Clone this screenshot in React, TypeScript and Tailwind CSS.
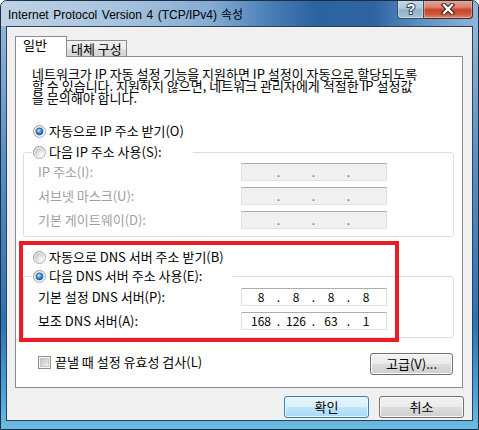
import React from "react";

const KR = "font-['Noto_Sans_CJK_KR','Noto_Sans_CJK_SC',sans-serif]";

function Radio({ checked }: { checked: boolean }) {
  return (
    <svg width="13" height="13" viewBox="0 0 13 13" className="shrink-0">
      <defs>
        <linearGradient id="rOuter" x1="0" y1="0" x2="1" y2="1">
          <stop offset="0" stopColor="#8b8c8c" />
          <stop offset="1" stopColor="#b9b9b9" />
        </linearGradient>
        <radialGradient id="rIn" cx="0.7" cy="0.75" r="0.85">
          <stop offset="0" stopColor="#ffffff" />
          <stop offset="1" stopColor="#c2c4c6" />
        </radialGradient>
        <radialGradient id="rDot" cx="0.4" cy="0.35" r="0.75">
          <stop offset="0" stopColor="#c6ebfd" />
          <stop offset="0.45" stopColor="#3d9be0" />
          <stop offset="1" stopColor="#0c4b91" />
        </radialGradient>
      </defs>
      <circle cx="6.5" cy="6.5" r="6" fill="#f5f5f5" stroke="url(#rOuter)" strokeWidth="1" />
      <circle cx="6.5" cy="6.5" r="4.6" fill="url(#rIn)" />
      {checked && (
        <circle cx="6.5" cy="6.5" r="3.4" fill="url(#rDot)" stroke="#1a4f88" strokeWidth="0.7" />
      )}
    </svg>
  );
}

function Checkbox() {
  return (
    <svg width="13" height="13" viewBox="0 0 13 13" className="shrink-0">
      <defs>
        <linearGradient id="cbIn" x1="0" y1="0" x2="1" y2="1">
          <stop offset="0" stopColor="#b8bcc2" />
          <stop offset="1" stopColor="#f4f4f5" />
        </linearGradient>
      </defs>
      <rect x="0.5" y="0.5" width="12" height="12" fill="#f6f6f6" stroke="#8e8f8f" />
      <rect x="2.5" y="2.5" width="8" height="8" fill="url(#cbIn)" stroke="#c4c7cc" />
    </svg>
  );
}

function IpField({ values, disabled }: { values?: string[]; disabled?: boolean }) {
  return (
    <div
      className={`flex h-[18px] w-[146px] items-center border border-[#dde1e6] border-t-[#abadb3] pl-[3px] text-[12px] leading-[16px] ${
        disabled ? "bg-[#f0f0f0]" : "bg-white"
      }`}
    >
      {[0, 1, 2, 3].map((i) => (
        <React.Fragment key={i}>
          {i > 0 && (
            <span className={`flex w-[3px] justify-center ${disabled ? "text-[#6d6d6d]" : "text-black"}`}>.</span>
          )}
          <span className="w-[32px] text-center text-black">{values ? values[i] : ""}</span>
        </React.Fragment>
      ))}
    </div>
  );
}

function WinButton({ label, focused, className = "" }: { label: string; focused?: boolean; className?: string }) {
  return (
    <div
      className={`flex h-[22px] items-center justify-center rounded-[3px] border text-[13px] leading-[14px] text-black ${
        focused
          ? "border-[#3c7fb1] bg-[linear-gradient(to_bottom,#eaf6fd_0%,#d9f0fc_50%,#bee6fd_50%,#a7d9f5_100%)] shadow-[inset_0_0_0_1px_#e6f6ff]"
          : "border-[#707070] bg-[linear-gradient(to_bottom,#f2f2f2_0%,#ebebeb_50%,#dddddd_50%,#cfcfcf_100%)] shadow-[inset_0_0_0_1px_#fbfbfb]"
      } ${className}`}
    >
      {label}
    </div>
  );
}

export default function App() {
  return (
    <div className={`relative h-[430px] w-[479px] overflow-hidden ${KR}`}>
      <div className="h-[430px] w-[479px] overflow-hidden rounded-t-[7px] border border-[#1c3045] bg-[linear-gradient(to_bottom,#9cbddb_0%,#5c90c3_35%,#2e71b0_75%,#4ea3d8_92%,#6cbce4_100%)]">
        {/* Title bar */}
        <div className="flex h-[25px] bg-[linear-gradient(to_right,#bfd3e5_0%,#a6c3de_25%,#86acd3_44%,#4a80b8_56%,#2b62a0_66%,#2d64a1_78%,#5d90c2_88%,#8fb6da_100%)]">
          <div className="flex items-baseline whitespace-nowrap pl-[7px] pt-[5px] leading-[15px] text-black">
            <span className="inline-block w-[209px] font-['Liberation_Sans',sans-serif] text-[12px] [text-align-last:justify]">
              Internet Protocol Version 4 (TCP/IPv4)
            </span>
            <span className="ml-[4px] text-[12px]">속성</span>
          </div>
          <div className="ml-auto mr-[5px] flex h-[19px] -mt-px">
            <div className="flex h-full w-[27px] items-center justify-center rounded-bl-[4px] border border-t-0 border-[#3b4f63] bg-[linear-gradient(to_bottom,#c9d9e7_0%,#b3c8db_45%,#92afc8_55%,#a9c4da_100%)] shadow-[inset_0_0_0_1px_rgba(255,255,255,0.35)]">
              <svg width="16" height="16" viewBox="0 0 16 16">
                <text
                  x="8"
                  y="13"
                  textAnchor="middle"
                  fontFamily="Liberation Sans, sans-serif"
                  fontWeight="bold"
                  fontSize="14"
                  fill="#ffffff"
                  stroke="#33475c"
                  strokeWidth="2"
                  paintOrder="stroke"
                >
                  ?
                </text>
              </svg>
            </div>
            <div className="flex h-full w-[49px] items-center justify-center rounded-br-[4px] border border-l-0 border-t-0 border-[#4a2a25] bg-[linear-gradient(to_bottom,#e9a898_0%,#d8826e_40%,#c4442a_55%,#cf5a3e_80%,#e08a6e_100%)] shadow-[inset_0_0_0_1px_rgba(255,255,255,0.3)]">
              <svg width="14" height="12" viewBox="0 0 14 12">
                <path d="M3 2 L11 10 M11 2 L3 10" stroke="#3a1f1a" strokeWidth="4.5" strokeLinecap="square" />
                <path d="M3 2 L11 10 M11 2 L3 10" stroke="#ffffff" strokeWidth="2.4" strokeLinecap="square" />
              </svg>
            </div>
          </div>
        </div>

        {/* Client area */}
        <div className="ml-[5px] h-[395px] w-[467px] border border-[#2c4257] bg-[#f0f0f0]">
          {/* Tabs */}
          <div className="flex items-end pl-[8px] pt-[9px]">
            <div className="relative z-10 -mb-px h-[21px] w-[52px] border border-b-0 border-[#898c95] bg-white pl-[7px] pt-[2px] text-[13px] leading-[12px] text-black">
              일반
            </div>
            <div className="h-[16px] w-[60px] whitespace-nowrap border border-b-0 border-l-0 border-[#898c95] bg-[linear-gradient(to_bottom,#f3f3f3_0%,#ebebeb_50%,#dedede_50%,#d5d5d5_100%)] pl-[4px] pt-[2px] text-[13px] leading-[12px] text-black">
              대체 구성
            </div>
          </div>

          {/* Panel */}
          <div className="ml-[8px] flex h-[332px] w-[448px] flex-col border border-[#898c95] bg-white text-[13px] text-black">
            <div className="mt-[11px] pl-[16px] leading-[12px] whitespace-nowrap">
              <div>네트워크가 IP 자동 설정 기능을 지원하면 IP 설정이 자동으로 할당되도록</div>
              <div>할 수 있습니다. 지원하지 않으면, 네트워크 관리자에게 적절한 IP 설정값</div>
              <div>을 문의해야 합니다.</div>
            </div>

            <div className="ml-[17px] mt-[20px] flex h-[14px] items-center gap-[3px] leading-[14px]">
              <Radio checked />
              <span className="-mt-px">자동으로 IP 주소 받기(O)</span>
            </div>

            <div className="relative z-10 ml-[16px] mt-[7px] flex h-[14px] w-[161px] items-center gap-[3px] bg-white pl-[1px] leading-[14px]">
              <Radio checked={false} />
              <span className="-mt-px">다음 IP 주소 사용(S):</span>
            </div>
            <div className="ml-[7px] -mt-[7px] flex h-[85px] w-[431px] flex-col gap-[6px] rounded-[3px] border border-[#d5dfe5] pt-[10px]">
              {["IP 주소(I):", "서브넷 마스크(U):", "기본 게이트웨이(D):"].map((l) => (
                <div key={l} className="flex h-[18px] items-center">
                  <span className="w-[217px] pl-[14px] leading-[14px] text-[#a0a0a0]">{l}</span>
                  <IpField disabled />
                </div>
              ))}
            </div>

            <div className="ml-[17px] mt-[13px] flex h-[14px] items-center gap-[3px] leading-[14px]">
              <Radio checked={false} />
              <span className="-mt-px">자동으로 DNS 서버 주소 받기(B)</span>
            </div>

            <div className="relative z-10 ml-[16px] mt-[5px] flex h-[14px] w-[201px] items-center gap-[3px] bg-white pl-[1px] leading-[14px]">
              <Radio checked />
              <span className="-mt-px">다음 DNS 서버 주소 사용(E):</span>
            </div>
            <div className="ml-[7px] -mt-[7px] flex h-[62px] w-[431px] flex-col gap-[6px] rounded-[3px] border border-[#d5dfe5] pt-[11px]">
              <div className="flex h-[18px] items-center">
                <span className="w-[217px] pl-[14px] leading-[14px]">기본 설정 DNS 서버(P):</span>
                <IpField values={["8", "8", "8", "8"]} />
              </div>
              <div className="flex h-[18px] items-center">
                <span className="w-[217px] pl-[14px] leading-[14px]">보조 DNS 서버(A):</span>
                <IpField values={["168", "126", "63", "1"]} />
              </div>
            </div>

            <div className="mt-[15px] flex h-[22px]">
              <div className="ml-[22px] mt-[2px] flex h-[14px] items-center gap-[4px] self-start leading-[14px]">
                <Checkbox />
                <span className="-mt-px">끝낼 때 설정 유효성 검사(L)</span>
              </div>
              <WinButton label="고급(V)..." className="ml-auto mr-[9px] w-[83px]" />
            </div>
          </div>

          {/* Bottom buttons */}
          <div className="mt-[8px] flex justify-end gap-[10px] pr-[8px]">
            <WinButton label="확인" focused className="w-[85px]" />
            <WinButton label="취소" className="w-[85px]" />
          </div>
        </div>
      </div>

      {/* Red highlight annotation */}
      <div className="pointer-events-none absolute left-[19px] top-[241px] h-[101px] w-[380px] border-4 border-[#ed1c24]" />
    </div>
  );
}
